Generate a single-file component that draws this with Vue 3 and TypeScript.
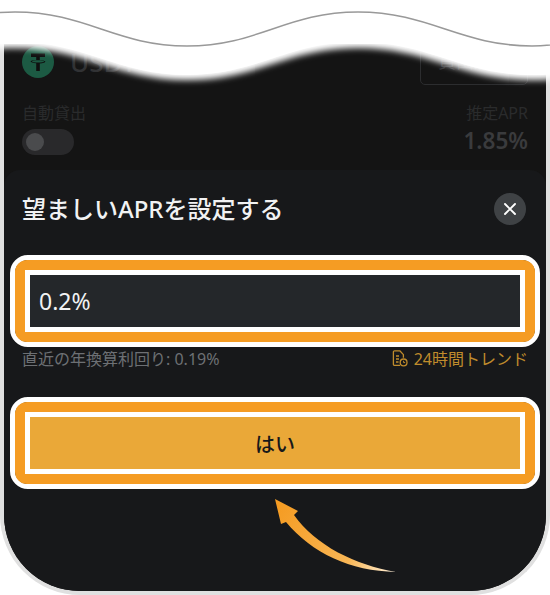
<script setup lang="ts">
const title = '望ましいAPRを設定する'
const rate = '0.2%'
</script>

<template>
  <div class="page">
    <div class="phone">
      <section class="behind">
        <div class="coin-row">
          <div class="coin">
            <svg class="coin-icon" width="32" height="32" viewBox="0 0 32 32">
              <circle cx="16" cy="16" r="16" fill="#1c5a43" />
              <path d="M9 7.5h14v3.4h-5.2v3.2c3.2.2 5.6.9 5.6 1.7s-2.4 1.5-5.6 1.7V25h-3.6v-7.7c-3.2-.2-5.6-.9-5.6-1.7s2.4-1.5 5.6-1.7v-3H9z" fill="#0f0f0f" />
              <path d="M10 15.4c0-.6 2.7-1.1 6-1.1s6 .5 6 1.1-2.7 1.1-6 1.1-6-.5-6-1.1z" fill="#1c5a43" />
            </svg>
            <span class="coin-name">USDT</span>
          </div>
          <div class="ghost-btn">貸出履歴</div>
        </div>
        <div class="stats">
          <div>
            <div class="dim-label">自動貸出</div>
            <div class="toggle"><span class="knob"></span></div>
          </div>
          <div class="right">
            <div class="dim-label">推定APR</div>
            <div class="apr">1.85%</div>
          </div>
        </div>
      </section>

      <section class="modal">
        <header class="modal-head">
          <h1>{{ title }}</h1>
          <button class="close" aria-label="閉じる">
            <svg width="14" height="14" viewBox="0 0 14 14">
              <path d="M2 2l10 10M12 2L2 12" stroke="#fff" stroke-width="1.9" stroke-linecap="round" />
            </svg>
          </button>
        </header>

        <div class="mark">
          <div class="mark-orange">
            <div class="mark-inner">
              <div class="field">{{ rate }}</div>
            </div>
          </div>
        </div>

        <div class="hint-row">
          <span class="hint">直近の年換算利回り: 0.19%</span>
          <span class="trend">
            <svg width="16" height="17" viewBox="0 0 16 17" fill="none" stroke="#c08c2c" stroke-width="1.3">
              <path d="M8 15.4H2.6a1.2 1.2 0 0 1-1.2-1.2V2a1.2 1.2 0 0 1 1.2-1.2h5.2l3.6 3.8v3.2" stroke-linejoin="round" />
              <path d="M4 6h3M4 9h3M4 12h2.5" />
              <circle cx="11.6" cy="12.4" r="3.4" />
              <path d="M11.6 10.8v1.8h1.5" stroke-width="1" />
            </svg>
            24時間トレンド
          </span>
        </div>

        <div class="mark mark-button">
          <div class="mark-orange">
            <div class="mark-inner">
              <button class="yes">はい</button>
            </div>
          </div>
        </div>
      </section>
    </div>

    <svg class="wave" width="550" height="95" viewBox="0 0 550 95">
      <defs>
        <filter id="soft" x="-5%" y="-20%" width="110%" height="150%">
          <feGaussianBlur stdDeviation="3" />
        </filter>
      </defs>
      <path
        d="M-157 -20V80C-86 80-56 48 15 48C86 48 116 80 187 80C258 80 287 48 358 48C429 48 461 80 532 80C590 80 620 60 640 50V-20Z"
        fill="#fff"
        filter="url(#soft)"
      />
      <path
        d="M-157 -20V75C-86 75-56 42 15 42C86 42 116 75 187 75C258 75 287 42 358 42C429 42 461 75 532 75C590 75 620 60 640 50V-20Z"
        fill="#fff"
      />
      <path
        d="M-157 46C-86 46-56 12 15 12C86 12 116 46 187 46C258 46 287 12 358 12C429 12 461 46 532 46C555 46 575 42 600 36"
        fill="none"
        stroke="#999"
        stroke-width="1.5"
      />
    </svg>

    <svg class="arrow" width="550" height="595" viewBox="0 0 550 595">
      <defs>
        <linearGradient id="arrowFill" gradientUnits="userSpaceOnUse" x1="280" y1="505" x2="396" y2="572">
          <stop offset="0" stop-color="#f59c23" />
          <stop offset="0.65" stop-color="#f9b655" />
          <stop offset="1" stop-color="#fff1dc" />
        </linearGradient>
      </defs>
      <path
        d="M275 499L298 511L294 515C315 545 355 565 396 572C350 571 312 553 286 522L281 524Z"
        fill="url(#arrowFill)"
      />
    </svg>
  </div>
</template>

<style scoped>
.page {
  position: relative;
  width: 550px;
  height: 595px;
  overflow: hidden;
  background: #fff;
  font-family: "Noto Sans", "Noto Sans CJK JP", sans-serif;
}

.phone {
  box-sizing: border-box;
  display: flex;
  flex-direction: column;
  width: 550px;
  height: 551px;
  margin-top: 44px;
  border: 4px solid #e0e0e0;
  border-top: 0;
  border-radius: 0 0 80px 80px;
  background: #141414;
  overflow: hidden;
}

.behind {
  box-sizing: border-box;
  height: 126px;
  padding: 0 18px;
}

.coin-row {
  display: flex;
  align-items: flex-start;
  justify-content: space-between;
  height: 41px;
}

.coin {
  display: flex;
  align-items: center;
  gap: 16px;
  margin-top: 2px;
}

.coin-name {
  font-size: 26px;
  line-height: 32px;
  font-weight: 500;
  color: #313234;
}

.ghost-btn {
  box-sizing: border-box;
  width: 108px;
  height: 41px;
  padding: 4px 0 0 17px;
  border: 1px solid #2c2d2f;
  border-radius: 5px;
  font-size: 18px;
  line-height: 24px;
  color: #313234;
}

.stats {
  display: flex;
  justify-content: space-between;
  margin-top: 13px;
}

.dim-label {
  font-size: 16px;
  line-height: 30px;
  color: #2a2b2c;
}

.toggle {
  display: flex;
  align-items: center;
  width: 52px;
  height: 26px;
  margin-top: 1px;
  padding-left: 4px;
  box-sizing: border-box;
  border-radius: 13px;
  background: #29292b;
}

.knob {
  width: 18px;
  height: 18px;
  border-radius: 50%;
  background: #4a4b4d;
}

.right {
  text-align: right;
}

.apr {
  font-size: 22.5px;
  font-weight: 600;
  line-height: 26px;
  color: #3a3b3d;
}

.modal {
  flex: 1;
  padding: 0 6px;
  border-radius: 16px 16px 0 0;
  background: #17181a;
}

.modal-head {
  display: flex;
  align-items: center;
  justify-content: space-between;
  height: 78px;
  padding: 0 14px 0 12px;
}

.modal-head h1 {
  margin: 0 0 3px;
  font-size: 24px;
  font-weight: 500;
  color: #f1f2f3;
}

.close {
  display: flex;
  align-items: center;
  justify-content: center;
  width: 32px;
  height: 32px;
  padding: 0;
  border: 0;
  border-radius: 50%;
  background: #3f4245;
}

.mark {
  margin-top: 7px;
  border: 5px solid #fff;
  border-radius: 18px;
  box-sizing: border-box;
}

.mark-orange {
  border: 10px solid #f59c23;
  border-radius: 12px;
}

.mark-inner {
  border: 5px solid #fff;
}

.field {
  box-sizing: border-box;
  height: 52px;
  padding-left: 9px;
  background: #24272a;
  font-size: 23px;
  line-height: 52px;
  color: #f1f2f3;
}

.hint-row {
  display: flex;
  align-items: center;
  justify-content: space-between;
  height: 22px;
  padding: 0 12px;
}

.hint {
  font-size: 16px;
  color: #6d7074;
}

.trend {
  display: flex;
  align-items: center;
  gap: 6px;
  font-size: 16px;
  color: #c08c2c;
}

.mark-button {
  margin-top: 28px;
}

.yes {
  display: block;
  width: 100%;
  height: 52px;
  padding: 0;
  border: 0;
  background: #eaa838;
  font-family: inherit;
  font-size: 20px;
  font-weight: 500;
  color: #17181a;
}

.wave,
.arrow {
  position: absolute;
  top: 0;
  left: 0;
  pointer-events: none;
}
</style>
